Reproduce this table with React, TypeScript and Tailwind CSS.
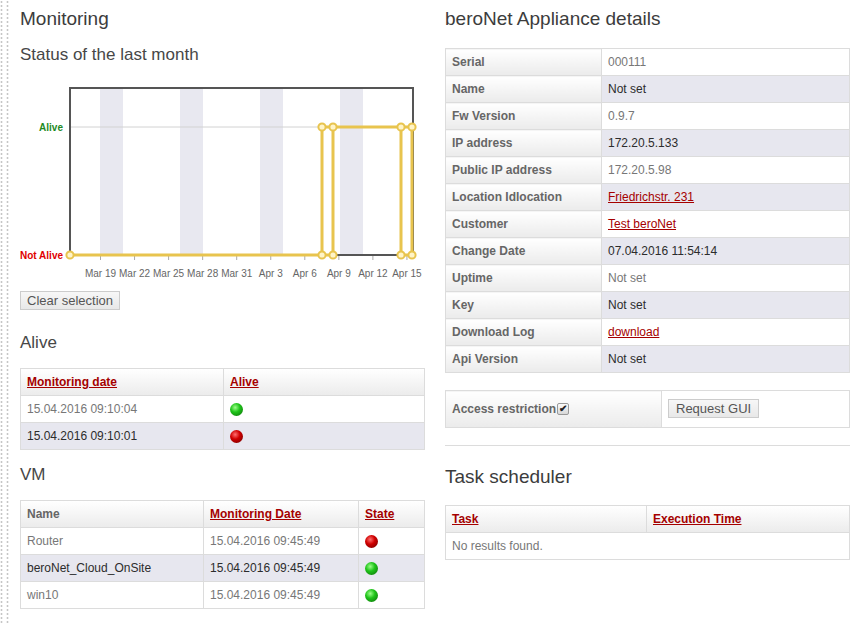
import React from "react";

const LINK = "text-[#a50000] underline";
const GRAD = "bg-[linear-gradient(#ffffff,#ebebeb)]";
const ALT = "bg-[#e7e7ef]";
const CELL = "border border-[#dcdcdc] px-[6px] py-0 text-left align-middle";

const Ball = ({ color }: { color: "green" | "red" }) => (
  <span
    className={
      color === "green"
        ? "inline-block w-[13px] h-[13px] rounded-full align-middle bg-[radial-gradient(circle_at_40%_35%,#9dff8a_0%,#1fc41a_40%,#0a6a07_100%)]"
        : "inline-block w-[13px] h-[13px] rounded-full align-middle bg-[radial-gradient(circle_at_40%_35%,#ff7070_0%,#d00000_40%,#650000_100%)]"
    }
  />
);

function Chart() {
  const ticks = ["Mar 19", "Mar 22", "Mar 25", "Mar 28", "Mar 31", "Apr 3", "Apr 6", "Apr 9", "Apr 12", "Apr 15"];
  const Y = "#e8c44e";
  const pts = [
    [50, 190], [302, 190], [313, 190], [381, 190], [392, 190],
    [302, 62], [313, 62], [381, 62], [392, 62],
  ];
  return (
    <svg width="405" height="220" className="block">
      {[80, 160, 240, 320].map((x) => (
        <rect key={x} x={x} y={23} width={23} height={167} fill="#e8e8f0" />
      ))}
      <line x1={50} y1={62} x2={393} y2={62} stroke="#d2d2d2" strokeWidth={1} />
      <path d="M50 23 V191 M49 23 H394 M393 23 V191 M49 190 H394" stroke="#555" strokeWidth={2} fill="none" />
      {ticks.map((t, i) => {
        const x = 80.5 + 34.05 * i;
        return (
          <g key={t}>
            <line x1={x} y1={191} x2={x} y2={195} stroke="#aaa" strokeWidth={1} />
            <text x={x} y={212} textAnchor="middle" fontSize={10} fill="#666" fontFamily="'Liberation Sans', Arial, sans-serif">
              {t}
            </text>
          </g>
        );
      })}
      <text x={43} y={66} textAnchor="end" fontSize={10} fontWeight="bold" fill="#1e8a1e" fontFamily="'Liberation Sans', Arial, sans-serif">
        Alive
      </text>
      <text x={43} y={194} textAnchor="end" fontSize={10} fontWeight="bold" fill="#e00000" fontFamily="'Liberation Sans', Arial, sans-serif">
        Not Alive
      </text>
      <path
        d="M50 190 H313 M302 190 V62 H392 M313 62 V190 M381 62 V190 H392 M392 62 V190"
        stroke={Y}
        strokeWidth={3}
        fill="none"
        strokeLinejoin="round"
      />
      {pts.map(([x, y], i) => (
        <circle key={i} cx={x} cy={y} r={3.6} fill="#fff4c8" stroke={Y} strokeWidth={2} />
      ))}
    </svg>
  );
}

const details: [string, string, boolean][] = [
  ["Serial", "000111", false],
  ["Name", "Not set", false],
  ["Fw Version", "0.9.7", false],
  ["IP address", "172.20.5.133", false],
  ["Public IP address", "172.20.5.98", false],
  ["Location Idlocation", "Friedrichstr. 231", true],
  ["Customer", "Test beroNet", true],
  ["Change Date", "07.04.2016 11:54:14", false],
  ["Uptime", "Not set", false],
  ["Key", "Not set", false],
  ["Download Log", "download", true],
  ["Api Version", "Not set", false],
];

const vms: [string, string, "green" | "red"][] = [
  ["Router", "15.04.2016 09:45:49", "red"],
  ["beroNet_Cloud_OnSite", "15.04.2016 09:45:49", "green"],
  ["win10", "15.04.2016 09:45:49", "green"],
];

export default function App() {
  return (
    <div className="flex min-h-screen bg-white font-['Liberation_Sans',Arial,sans-serif] text-[12px] text-[#777]">
      <div className="w-[9px] shrink-0 self-stretch bg-[radial-gradient(circle_at_1.5px_2px,#c6c6c6_0.9px,transparent_1.2px),radial-gradient(circle_at_7.5px_2px,#c6c6c6_0.9px,transparent_1.2px)] bg-[length:9px_4px]" />
      <div className="flex gap-[20px] pl-[11px]">
        {/* Left column */}
        <div className="w-[405px] flex flex-col">
          <h2 className="mt-[8px] text-[19px] leading-[22px] text-[#3c3c3c]">Monitoring</h2>
          <h3 className="mt-[15px] text-[17px] leading-[20px] text-[#474747]">Status of the last month</h3>
          <Chart />
          <div className="mt-[6px]">
            <button className="h-[19px] px-[6px] border border-[#cccccc] bg-[linear-gradient(#f7f7f7,#e8e8e8)] text-[13px] leading-[17px] text-[#555]">
              Clear selection
            </button>
          </div>
          <h3 className="mt-[23px] text-[17px] leading-[20px] text-[#474747]">Alive</h3>
          <table className="mt-[15px] w-[405px] table-fixed border-collapse border border-[#dcdcdc]">
            <colgroup>
              <col className="w-[203px]" />
              <col />
            </colgroup>
            <thead>
              <tr className={`h-[27px] ${GRAD}`}>
                <th className={`${CELL} font-bold`}><a className={LINK}>Monitoring date</a></th>
                <th className={`${CELL} font-bold`}><a className={LINK}>Alive</a></th>
              </tr>
            </thead>
            <tbody>
              <tr className="h-[27px] bg-white">
                <td className={CELL}>15.04.2016 09:10:04</td>
                <td className={CELL}><Ball color="green" /></td>
              </tr>
              <tr className={`h-[27px] ${ALT} text-[#2c2c2c]`}>
                <td className={CELL}>15.04.2016 09:10:01</td>
                <td className={CELL}><Ball color="red" /></td>
              </tr>
            </tbody>
          </table>
          <h3 className="mt-[15px] text-[17px] leading-[20px] text-[#474747]">VM</h3>
          <table className="mt-[15px] w-[405px] table-fixed border-collapse border border-[#dcdcdc]">
            <colgroup>
              <col className="w-[183px]" />
              <col className="w-[155px]" />
              <col />
            </colgroup>
            <thead>
              <tr className={`h-[27px] ${GRAD}`}>
                <th className={`${CELL} font-bold text-[#666]`}>Name</th>
                <th className={`${CELL} font-bold`}><a className={LINK}>Monitoring Date</a></th>
                <th className={`${CELL} font-bold`}><a className={LINK}>State</a></th>
              </tr>
            </thead>
            <tbody>
              {vms.map(([n, d, c], i) => (
                <tr key={n} className={i % 2 === 1 ? `h-[27px] ${ALT} text-[#2c2c2c]` : "h-[27px] bg-white"}>
                  <td className={CELL}>{n}</td>
                  <td className={CELL}>{d}</td>
                  <td className={CELL}><Ball color={c} /></td>
                </tr>
              ))}
            </tbody>
          </table>
        </div>

        {/* Right column */}
        <div className="w-[405px] flex flex-col">
          <h2 className="mt-[8px] text-[19px] leading-[22px] text-[#3c3c3c]">beroNet Appliance details</h2>
          <table className="mt-[18px] w-[405px] table-fixed border-collapse border border-[#dcdcdc]">
            <colgroup>
              <col className="w-[156px]" />
              <col />
            </colgroup>
            <tbody>
              {details.map(([k, v, link], i) => (
                <tr key={k} className="h-[27px]">
                  <th className={`${CELL} ${GRAD} font-bold text-[#666]`}>{k}</th>
                  <td className={`${CELL} ${i % 2 === 1 ? `${ALT} text-[#2c2c2c]` : "bg-white"}`}>
                    {link ? <a className={LINK}>{v}</a> : v}
                  </td>
                </tr>
              ))}
            </tbody>
          </table>
          <table className="mt-[17px] w-[405px] table-fixed border-collapse border border-[#dcdcdc]">
            <colgroup>
              <col className="w-[216px]" />
              <col />
            </colgroup>
            <tbody>
              <tr className="h-[37px]">
                <th className={`${CELL} ${GRAD} font-bold text-[#666]`}>
                  <span className="inline-flex items-center">
                    Access restriction
                    <span className="ml-[1px] inline-flex h-[12px] w-[12px] items-center justify-center rounded-[2px] border border-[#999] bg-[linear-gradient(#fafafa,#d8d8d8)] text-[10px] leading-none text-[#222]">
                      ✔
                    </span>
                  </span>
                </th>
                <td className={`${CELL} bg-white`}>
                  <button className="-mt-[5px] h-[19px] px-[7px] border border-[#cccccc] bg-[linear-gradient(#f7f7f7,#e8e8e8)] text-[13px] leading-[17px] text-[#555]">
                    Request GUI
                  </button>
                </td>
              </tr>
            </tbody>
          </table>
          <div className="mt-[17px] h-px bg-[#dcdcdc]" />
          <h2 className="mt-[20px] text-[19px] leading-[22px] text-[#3c3c3c]">Task scheduler</h2>
          <table className="mt-[17px] w-[405px] table-fixed border-collapse border border-[#dcdcdc]">
            <colgroup>
              <col className="w-[201px]" />
              <col />
            </colgroup>
            <thead>
              <tr className={`h-[27px] ${GRAD}`}>
                <th className={`${CELL} font-bold`}><a className={LINK}>Task</a></th>
                <th className={`${CELL} font-bold`}><a className={LINK}>Execution Time</a></th>
              </tr>
            </thead>
            <tbody>
              <tr className="h-[27px] bg-white">
                <td className={CELL} colSpan={2}>No results found.</td>
              </tr>
            </tbody>
          </table>
        </div>
      </div>
    </div>
  );
}
